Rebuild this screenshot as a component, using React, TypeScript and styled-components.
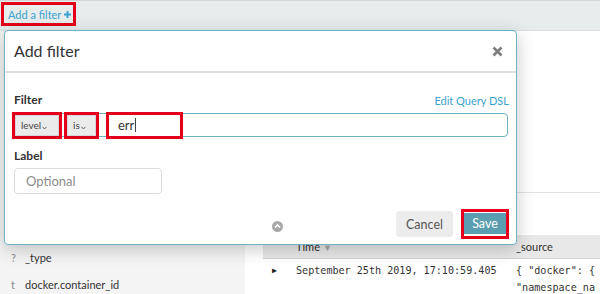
import React from "react";
import styled, { createGlobalStyle } from "styled-components";

const Global = createGlobalStyle`
  html, body { margin: 0; padding: 0; }
  body {
    width: 600px;
    height: 294px;
    overflow: hidden;
    font-family: Lato, "Open Sans", sans-serif;
    background: #ffffff;
    color: #333;
  }
`;

const RED = "#e4001b";
const TEAL = "#6fb2c5";
const LINK = "#3ba3cf";

const Page = styled.div`
  position: relative;
  width: 600px;
  height: 294px;
  overflow: hidden;
  display: flex;
  flex-direction: column;
`;

const TopBar = styled.div`
  height: 31px;
  flex: none;
  background: #e7ecec;
  border-top: 1px solid #d2d6d6;
  border-bottom: 1px solid #dadede;
  display: flex;
  align-items: flex-start;
  padding: 1px 0 0 1px;
  box-sizing: border-box;
`;

const FilterLink = styled.div`
  border: 3px solid ${RED};
  height: 24px;
  box-sizing: border-box;
  padding: 0 0 0 4px;
  width: 75px;
  display: flex;
  align-items: center;
  gap: 3px;
  font-size: 11px;
  color: ${LINK};
`;

const Main = styled.div`
  flex: 1;
  display: flex;
`;

const Sidebar = styled.div`
  width: 245px;
  flex: none;
  background: #f4f4f4;
  padding-top: 213px;
  box-sizing: border-box;
`;

const FieldItem = styled.div`
  height: 27px;
  display: flex;
  align-items: center;
  padding-left: 11px;
  font-size: 11px;
  color: #333;
`;

const FieldType = styled.span`
  width: 14px;
  color: #8a8a8a;
`;

const Content = styled.div`
  flex: 1;
  display: flex;
  flex-direction: column;
`;

const UpperPanel = styled.div`
  height: 161px;
  border-bottom: 1px solid #e2e2e2;
  flex: none;
`;

const Table = styled.div`
  margin-top: 42px;
  margin-left: 18px;
  display: flex;
  flex-direction: column;
`;

const HeaderRow = styled.div`
  height: 23px;
  background: #e8e8e8;
  border-bottom: 1px solid #d2d2d2;
  display: grid;
  grid-template-columns: 33px 220px 1fr;
  align-items: center;
  font-size: 11px;
  color: #333;
`;

const SortIcon = styled.span`
  color: #aaa;
  font-size: 9px;
  margin-left: 3px;
`;

const DataRow = styled.div`
  display: grid;
  grid-template-columns: 33px 220px 1fr;
  padding-top: 3px;
  font-family: "DejaVu Sans Mono", "Liberation Mono", monospace;
  font-size: 10.1px;
  line-height: 17px;
  color: #333;
  white-space: nowrap;
`;

const Caret = styled.span`
  font-size: 8px;
  padding-left: 9px;
  color: #222;
`;

const Modal = styled.div`
  position: absolute;
  left: 4px;
  top: 30px;
  width: 513px;
  height: 215px;
  box-sizing: border-box;
  background: #fff;
  border: 1px solid ${TEAL};
  border-radius: 4px;
  box-shadow: 0 4px 18px rgba(0, 0, 0, 0.22);
  display: flex;
  flex-direction: column;
`;

const ModalHeader = styled.div`
  height: 40px;
  flex: none;
  border-bottom: 2px solid #dedede;
  display: flex;
  align-items: center;
  justify-content: space-between;
  padding: 0 13px 0 9px;
`;

const Title = styled.div`
  font-size: 16px;
  color: #333;
  margin-top: -1px;
`;

const CloseIcon = styled.svg`
  width: 11px;
  height: 11px;
`;

const ModalBody = styled.div`
  padding: 18px 7px 0 9px;
  display: flex;
  flex-direction: column;
`;

const FieldLabelRow = styled.div`
  display: flex;
  justify-content: space-between;
  align-items: center;
  height: 16px;
`;

const FieldLabel = styled.div`
  font-size: 12px;
  font-weight: 700;
  color: #333;
`;

const DslLink = styled.div`
  font-size: 11px;
  color: ${LINK};
  margin-top: 2px;
`;

const FilterInput = styled.div`
  margin-top: 6px;
  margin-right: 1px;
  height: 24px;
  box-sizing: border-box;
  border: 1px solid ${TEAL};
  border-radius: 4px;
  display: flex;
  align-items: center;
`;

const RedBox = styled.div<{ $w: number; $ml: number }>`
  width: ${(p) => p.$w}px;
  margin-left: ${(p) => p.$ml}px;
  height: 27px;
  flex: none;
  box-sizing: border-box;
  border: 3px solid ${RED};
  display: flex;
  background: #fff;
`;

const Pill = styled.div`
  flex: 1;
  background: #ebebeb;
  border: 1px solid #d6d6d6;
  box-shadow: 0 1px 1px rgba(0,0,0,0.08);
  display: flex;
  align-items: center;
  padding-left: 5px;
  font-size: 10px;
  color: #444;
`;

const Chevron = styled.svg`
  width: 5px;
  height: 4px;
  margin-left: 1px;
  margin-top: 5px;
`;

const TextValue = styled.div`
  display: flex;
  align-items: center;
  padding-left: 9px;
  font-size: 13px;
  color: #333;
`;

const Cursor = styled.span`
  display: inline-block;
  width: 1px;
  height: 14px;
  background: #444;
  margin-left: 1px;
`;

const LabelTitle = styled(FieldLabel)`
  margin-top: 11px;
  line-height: 16px;
`;

const LabelInput = styled.div`
  margin-top: 4px;
  width: 148px;
  height: 26px;
  box-sizing: border-box;
  border: 1px solid #dcdcdc;
  border-radius: 4px;
  display: flex;
  align-items: center;
  padding-left: 11px;
  font-size: 13px;
  color: #8c8c8c;
`;

const Footer = styled.div`
  margin-top: 15px;
  height: 30px;
  display: flex;
  align-items: center;
`;

const CollapseIcon = styled.svg`
  width: 11px;
  height: 11px;
  margin-left: 258px;
  margin-top: 5px;
  margin-right: auto;
`;

const CancelButton = styled.div`
  width: 57px;
  height: 26px;
  border-radius: 4px;
  background: #ececec;
  display: flex;
  align-items: center;
  justify-content: center;
  font-size: 12.5px;
  color: #555;
  margin-right: 8px;
`;

const SaveBox = styled.div`
  width: 48px;
  height: 30px;
  box-sizing: border-box;
  border: 3px solid ${RED};
  padding: 1px 0 2px;
  display: flex;
`;

const SaveButton = styled.div`
  flex: 1;
  background: #5a9eb2;
  display: flex;
  align-items: center;
  justify-content: center;
  font-size: 12.5px;
  color: #fff;
`;

const Down = () => (
  <Chevron viewBox="0 0 5 4">
    <path d="M0.5 0.8 L2.5 3 L4.5 0.8" fill="none" stroke="#555" strokeWidth="0.9" />
  </Chevron>
);

export default function App() {
  return (
    <>
      <Global />
      <Page>
        <TopBar>
          <FilterLink>
            Add a filter
            <svg width="7" height="7" viewBox="0 0 7 7">
              <path d="M3.5 0 V7 M0 3.5 H7" stroke={LINK} strokeWidth="2" />
            </svg>
          </FilterLink>
        </TopBar>
        <Main>
          <Sidebar>
            <FieldItem>
              <FieldType>?</FieldType>_type
            </FieldItem>
            <FieldItem>
              <FieldType>t</FieldType>docker.container_id
            </FieldItem>
          </Sidebar>
          <Content>
            <UpperPanel />
            <Table>
              <HeaderRow>
                <span />
                <span>
                  Time<SortIcon>▼</SortIcon>
                </span>
                <span>_source</span>
              </HeaderRow>
              <DataRow>
                <Caret>▶</Caret>
                <span>September 25th 2019, 17:10:59.405</span>
                <span>
                  {'{ "docker": {'}
                  <br />
                  {'"namespace_na'}
                </span>
              </DataRow>
            </Table>
          </Content>
        </Main>
        <Modal>
          <ModalHeader>
            <Title>Add filter</Title>
            <CloseIcon viewBox="0 0 11 11">
              <path d="M1.5 1.5 L9.5 9.5 M9.5 1.5 L1.5 9.5" stroke="#7d7d7d" strokeWidth="2.6" />
            </CloseIcon>
          </ModalHeader>
          <ModalBody>
            <FieldLabelRow>
              <FieldLabel>Filter</FieldLabel>
              <DslLink>Edit Query DSL</DslLink>
            </FieldLabelRow>
            <FilterInput>
              <RedBox $w={50} $ml={-3}>
                <Pill>
                  level
                  <Down />
                </Pill>
              </RedBox>
              <RedBox $w={35} $ml={2}>
                <Pill>
                  is
                  <Down />
                </Pill>
              </RedBox>
              <RedBox $w={77} $ml={7}>
                <TextValue>
                  err
                  <Cursor />
                </TextValue>
              </RedBox>
            </FilterInput>
            <LabelTitle>Label</LabelTitle>
            <LabelInput>Optional</LabelInput>
            <Footer>
              <CollapseIcon viewBox="0 0 11 11">
                <circle cx="5.5" cy="5.5" r="5.5" fill="#a9a9a9" />
                <path d="M3 6.5 L5.5 4 L8 6.5" fill="none" stroke="#fff" strokeWidth="1.6" />
              </CollapseIcon>
              <CancelButton>Cancel</CancelButton>
              <SaveBox>
                <SaveButton>Save</SaveButton>
              </SaveBox>
            </Footer>
          </ModalBody>
        </Modal>
      </Page>
    </>
  );
}
